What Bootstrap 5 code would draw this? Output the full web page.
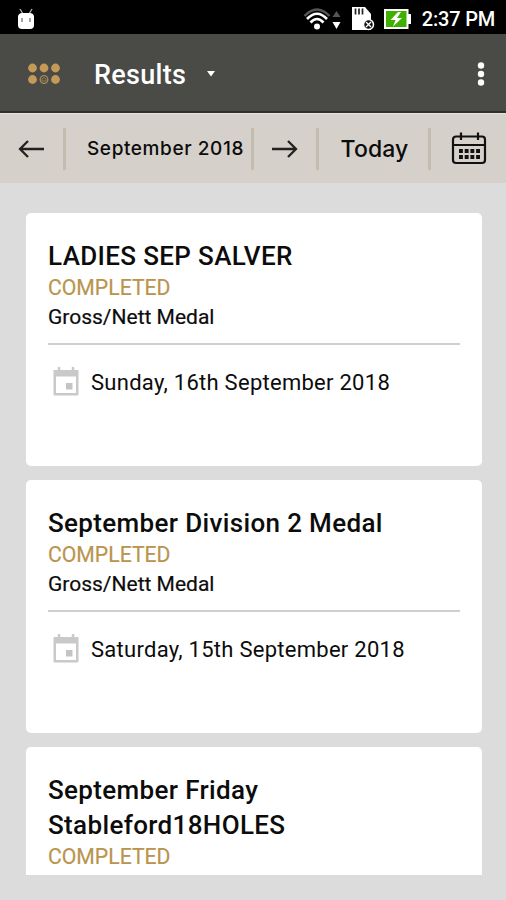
<!DOCTYPE html>
<html lang="en">
<head>
<meta charset="utf-8">
<meta name="viewport" content="width=device-width, initial-scale=1">
<title>Results</title>
<link href="https://cdn.jsdelivr.net/npm/bootstrap@5.3.0/dist/css/bootstrap.min.css" rel="stylesheet">
<style>
body{font-family:Roboto,"Liberation Sans",sans-serif;background:#dcdcdc;color:#0c0c0c;height:900px}
svg{display:block;flex:none}
.status-strip{height:34px;background:#000;padding:3px 11px 0 16px}
.clock{font-size:20px;line-height:30px;font-weight:500;letter-spacing:-.2px;margin-left:11px}
.app-bar{height:79px;background:#4a4a47;border-bottom:2px solid #2e2e2b;padding:2px 21px 0 28px}
.app-title{font-size:27px;font-weight:500;line-height:36px;margin:2px 21px 0 33px;letter-spacing:.3px;color:#fff}
.date-bar{height:70px;background:#d5d0c9;border-top:1px solid #e4e0da;padding-right:19px}
.date-bar .cell{height:42px;border-right:3px solid #c3bdb0}
.c-prev{width:66px;padding-left:18px}.c-month{width:188px;padding-left:21px}.c-next{width:65px;padding-left:18px}.c-today{width:112px;padding-left:2px}
.month{font-family:Inter,Roboto,sans-serif;font-size:19px;font-weight:500;letter-spacing:.6px;padding-top:2px}
.today{font-family:Inter,Roboto,sans-serif;font-size:23px;font-weight:500;letter-spacing:.1px;padding-top:2px}
.feed{height:692px;padding:30px 24px 0 25.5px}
.result{height:253px;margin-bottom:14px;padding:26px 22px 0 22.500px;border-radius:5px}
.result h2{font-size:26px;line-height:35px;font-weight:500;margin:0;letter-spacing:.35px}
.state{font-size:21.2px;line-height:28px;color:#b9954f;-webkit-text-stroke:.2px}
.kind{font-size:21px;line-height:30px;-webkit-text-stroke:.2px}
.rule{border-top:2px solid #cfcfcf;margin-top:11px}
.when{font-size:22px;line-height:30px;letter-spacing:.27px;margin:21px 0 0 5px;gap:12px}
.when span{padding-top:2px}
</style>
</head>
<body class="overflow-hidden">
<div class="status-strip d-flex align-items-center text-white">
  <svg width="20" height="22" viewBox="0 0 20 22"><path d="M4 1l3 5M16 1l-3 5" stroke="#aaa" stroke-width="1.4"/><path d="M2 8q1-3 4-3h8q3 0 4 3v9q0 4-4 4H6q-4 0-4-4z" fill="#fff"/><path d="M6 10v4M14 10v4" stroke="#888" stroke-width="1.5"/></svg>
  <svg class="ms-auto" width="40" height="24" viewBox="0 0 40 24" fill="none"><path d="M1.500 9Q14 -4 26.500 9" stroke="#555" stroke-width="2.500"/><path d="M4 12Q14 1.500 24 12M7.500 15.500Q14 8.500 20.500 15.500" stroke="#fff" stroke-width="2.700"/><circle cx="14" cy="19.500" r="3" fill="#fff"/><path d="M29.500 10l4-6 4 6z" fill="#555"/><path d="M29.500 15h8l-4 7z" fill="#fff"/></svg>
  <svg class="ms-2" width="25" height="24" viewBox="0 0 25 24"><path d="M1 0h13l6 7v16H1z" fill="#fff"/><path d="M4.500 1.500v6M8 1.500v6M11.500 1.500v6" stroke="#222" stroke-width="1.700"/><circle cx="17.500" cy="17.500" r="5" fill="#111" stroke="#fff" stroke-width="1.500"/><path d="M15 15l5 5M20 15l-5 5" stroke="#fff" stroke-width="1.400"/></svg>
  <svg class="ms-2" width="27" height="20" viewBox="0 0 27 20"><path d="M0 0h24.500v5H27v10h-2.500v5H0z" fill="#fff"/><path d="M2 2h20.500v16H2z" fill="#3fb000"/><path d="M14 3L6.500 11h5L9 17.500 18 9h-5l4-6z" fill="#fff"/></svg>
  <span class="clock">2:37 PM</span>
</div>
<header class="app-bar d-flex align-items-center">
  <svg width="33" height="22" viewBox="0 0 33 22" fill="#c39a58"><circle cx="4.500" cy="5" r="4.400"/><circle cx="16" cy="5" r="4.400"/><circle cx="27.500" cy="5" r="4.400"/><circle cx="4.500" cy="16.500" r="4.400"/><circle cx="27.500" cy="16.500" r="4.400"/><circle cx="16" cy="16.500" r="3.800" fill="none" stroke="#a88a55" stroke-width="1.300"/><path d="M14 18v-2l2-1.500 2 1.500v2z" fill="none" stroke="#927b50"/></svg>
  <span class="app-title">Results</span>
  <svg width="8" height="6" viewBox="0 0 8 6"><path d="M0 0h8L4 5.500z" fill="#fff"/></svg>
  <svg class="ms-auto" width="8" height="26" viewBox="0 0 8 26" fill="#fff"><circle cx="4" cy="4.500" r="3.200"/><circle cx="4" cy="13" r="3.200"/><circle cx="4" cy="21.500" r="3.200"/></svg>
</header>
<nav class="date-bar d-flex align-items-center">
  <div class="cell c-prev d-flex align-items-center"><svg width="26" height="20" viewBox="0 0 26 20" fill="none" stroke="#222" stroke-width="2.300"><path d="M2 10h24M10 2L2 10l8 8"/></svg></div>
  <div class="cell c-month d-flex align-items-center"><span class="month text-nowrap">September 2018</span></div>
  <div class="cell c-next d-flex align-items-center"><svg width="26" height="20" viewBox="0 0 26 20" fill="none" stroke="#222" stroke-width="2.300"><path d="M0 10h24M16 2l8 8-8 8"/></svg></div>
  <div class="cell c-today d-flex align-items-center justify-content-center"><span class="today">Today</span></div>
  <svg class="ms-auto" width="36" height="34" viewBox="0 0 36 34" fill="none" stroke="#111" stroke-width="2.200"><rect x="2" y="4.500" width="32" height="26.500" rx="3"/><path d="M2 13h32M10 .500v7.500M27 .500v7.500"/><path d="M8 19h21M8 25h21" stroke-width="3.800" stroke-dasharray="3.900 1.800"/></svg>
</nav>
<main class="feed overflow-hidden">
  <article class="result card border-0">
    <h2>LADIES SEP SALVER</h2><div class="state">COMPLETED</div><div class="kind">Gross/Nett Medal</div><div class="rule"></div>
    <div class="when d-flex align-items-center"><svg width="26" height="30" viewBox="0 0 26 30"><path d="M.500 3h25v24q0 1.500-1.500 1.500H2Q.500 28.500 .500 27z" fill="#c9c9c9"/><path d="M3 9.500h20V26H3z" fill="#fff"/><path d="M13 16h6.500v6.500H13z" fill="#c4c4c4"/><path d="M6 0v4M20 0v4" stroke="#c9c9c9" stroke-width="2.500"/></svg><span>Sunday, 16th September 2018</span></div>
  </article>
  <article class="result card border-0">
    <h2>September Division 2 Medal</h2><div class="state">COMPLETED</div><div class="kind">Gross/Nett Medal</div><div class="rule"></div>
    <div class="when d-flex align-items-center"><svg width="26" height="30" viewBox="0 0 26 30"><path d="M.500 3h25v24q0 1.500-1.500 1.500H2Q.500 28.500 .500 27z" fill="#c9c9c9"/><path d="M3 9.500h20V26H3z" fill="#fff"/><path d="M13 16h6.500v6.500H13z" fill="#c4c4c4"/><path d="M6 0v4M20 0v4" stroke="#c9c9c9" stroke-width="2.500"/></svg><span>Saturday, 15th September 2018</span></div>
  </article>
  <article class="result card border-0">
    <h2>September Friday<br>Stableford18HOLES</h2><div class="state">COMPLETED</div>
  </article>
</main>
<script src="https://cdn.jsdelivr.net/npm/bootstrap@5.3.0/dist/js/bootstrap.bundle.min.js"></script>
</body>
</html>
